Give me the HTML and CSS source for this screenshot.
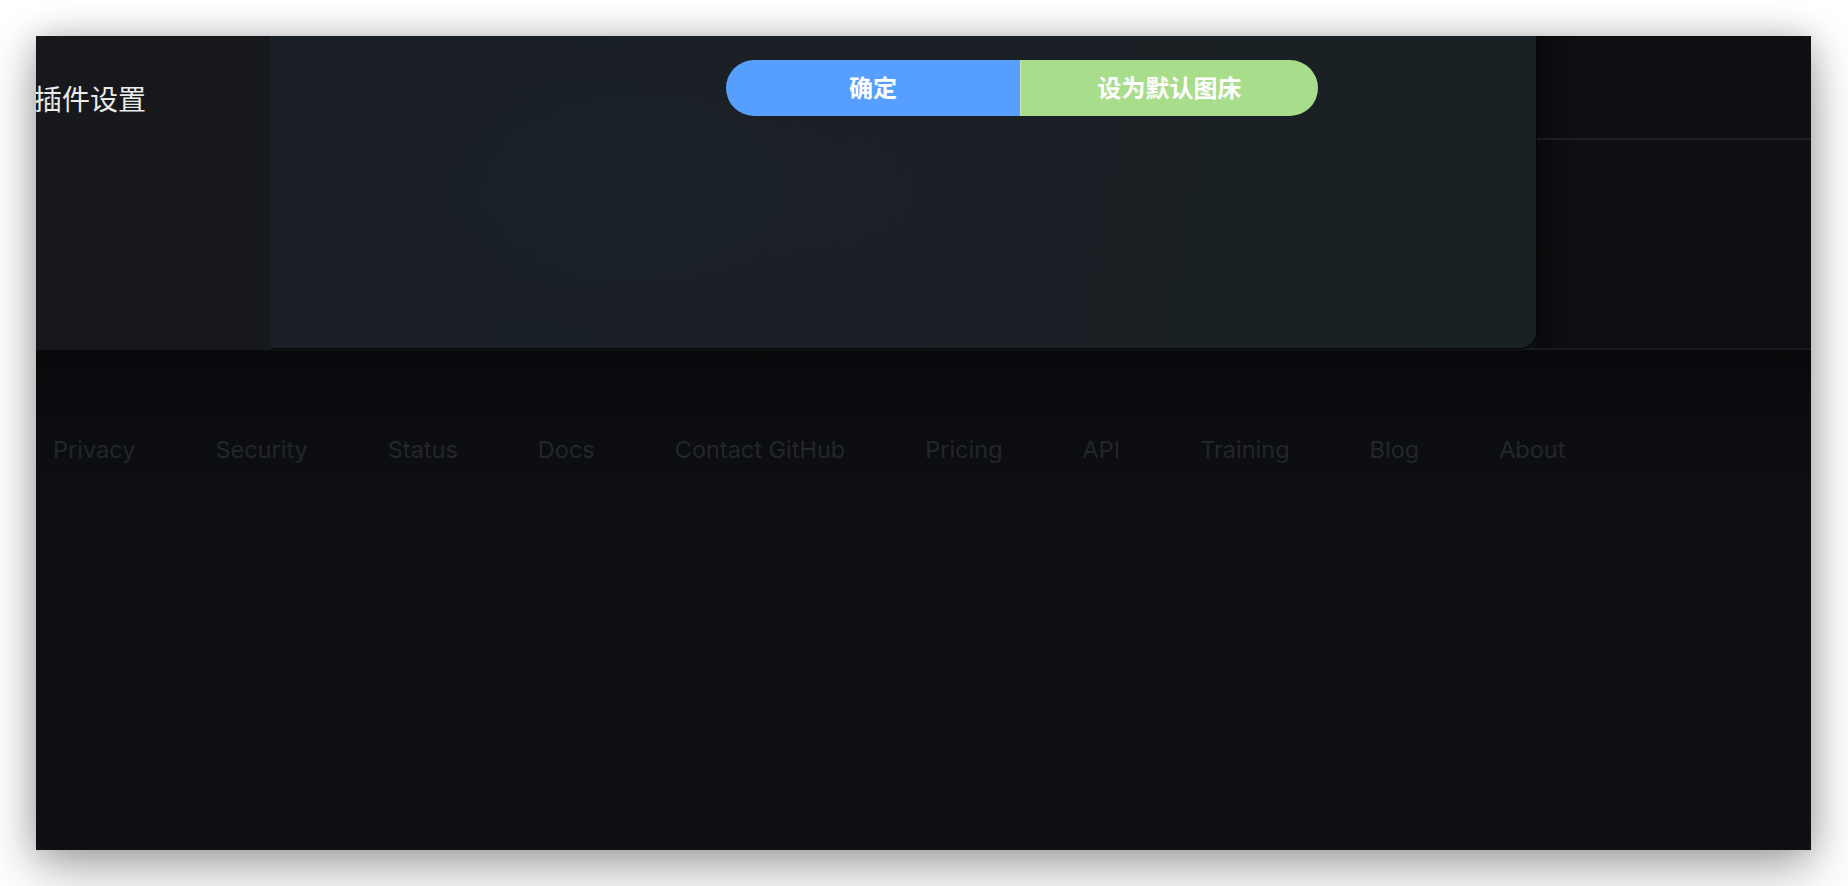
FILE: index.html
```html
<!DOCTYPE html>
<html lang="zh-CN">
<head>
<meta charset="utf-8">
<title>插件设置</title>
<link rel="stylesheet" href="styles.css">
</head>
<body>
<div class="window">
  <div class="top">
    <aside class="sidebar">
      <h2 class="side-title">插件设置</h2>
    </aside>
    <section class="dialog">
      <div class="btn-group">
        <button class="btn btn-primary">确定</button>
        <button class="btn btn-success">设为默认图床</button>
      </div>
    </section>
    <div class="right">
      <div class="right-head"></div>
      <div class="right-body"></div>
    </div>
  </div>
  <footer class="footer">
    <nav class="links">
      <a class="link">Privacy</a>
      <a class="link">Security</a>
      <a class="link">Status</a>
      <a class="link">Docs</a>
      <a class="link">Contact GitHub</a>
      <a class="link">Pricing</a>
      <a class="link">API</a>
      <a class="link">Training</a>
      <a class="link">Blog</a>
      <a class="link">About</a>
    </nav>
  </footer>
</div>
</body>
</html>
```
FILE: styles.css
```css
* { box-sizing: border-box; }
html, body { margin: 0; }
body {
  background: #ffffff;
  padding: 36px 37px 36px 36px;
  font-family: Inter, "Liberation Sans", "Noto Sans CJK SC", sans-serif;
}
.window {
  width: 1775px;
  height: 814px;
  display: flex;
  flex-direction: column;
  background: #0d0f12;
  box-shadow: 0 20px 50px rgba(0,0,0,0.3), 0 0 30px rgba(0,0,0,0.2);
  overflow: hidden;
}
.top {
  display: grid;
  grid-template-columns: 234px 1266px 1fr;
  height: 312px;
  flex: none;
}
.sidebar {
  background: #17181b;
  overflow: hidden;
  padding-top: 42px;
}
.side-title {
  margin: 0 0 0 -2px;
  font-family: "Noto Sans CJK SC", sans-serif;
  font-weight: 400;
  font-size: 28px;
  line-height: 40px;
  color: #ebebeb;
  white-space: nowrap;
}
.dialog {
  background:
    radial-gradient(ellipse 420px 200px at 360px 150px, rgba(28,34,44,0.5), transparent),
    linear-gradient(100deg, #1a1f26 0%, #1a2025 50%, #1a2124 100%);
  border-bottom-right-radius: 16px;
  padding: 24px 0 0 456px;
  box-shadow: 1px 1px 0 #050607;
  position: relative;
  z-index: 1;
}
.btn-group {
  display: flex;
}
.btn {
  height: 56px;
  border: 0;
  margin: 0;
  padding: 0 0 4px;
  font-family: "Noto Sans CJK SC", sans-serif;
  font-weight: 700;
  font-size: 24px;
  color: #ffffff;
  cursor: pointer;
}
.btn-primary {
  width: 295px;
  background: #569ffe;
  border-radius: 28px 0 0 28px;
  border-right: 1px solid #c9e6bb;
}
.btn-success {
  width: 297px;
  background: #a8dd8c;
  border-radius: 0 28px 28px 0;
}
.right {
  background: linear-gradient(90deg, #090a0c 0px, #0d0f12 40px, #0d0f12 100%);
  display: flex;
  flex-direction: column;
}
.right-head {
  height: 104px;
  border-bottom: 2px solid #1c1e23;
}
.right-body {
  flex: 1;
}
.footer {
  flex: 1;
  border-top: 2px solid #16181b;
  background: linear-gradient(180deg, #08090b 0px, #0b0c0f 60px, #0d0f12 140px, #0e1013 100%);
  padding: 85px 0 0 17px;
}
.links {
  display: flex;
  gap: 80px;
}
.link {
  font-size: 23.5px;
  line-height: 30px;
  color: #23262b;
  text-decoration: none;
  white-space: nowrap;
}
```
